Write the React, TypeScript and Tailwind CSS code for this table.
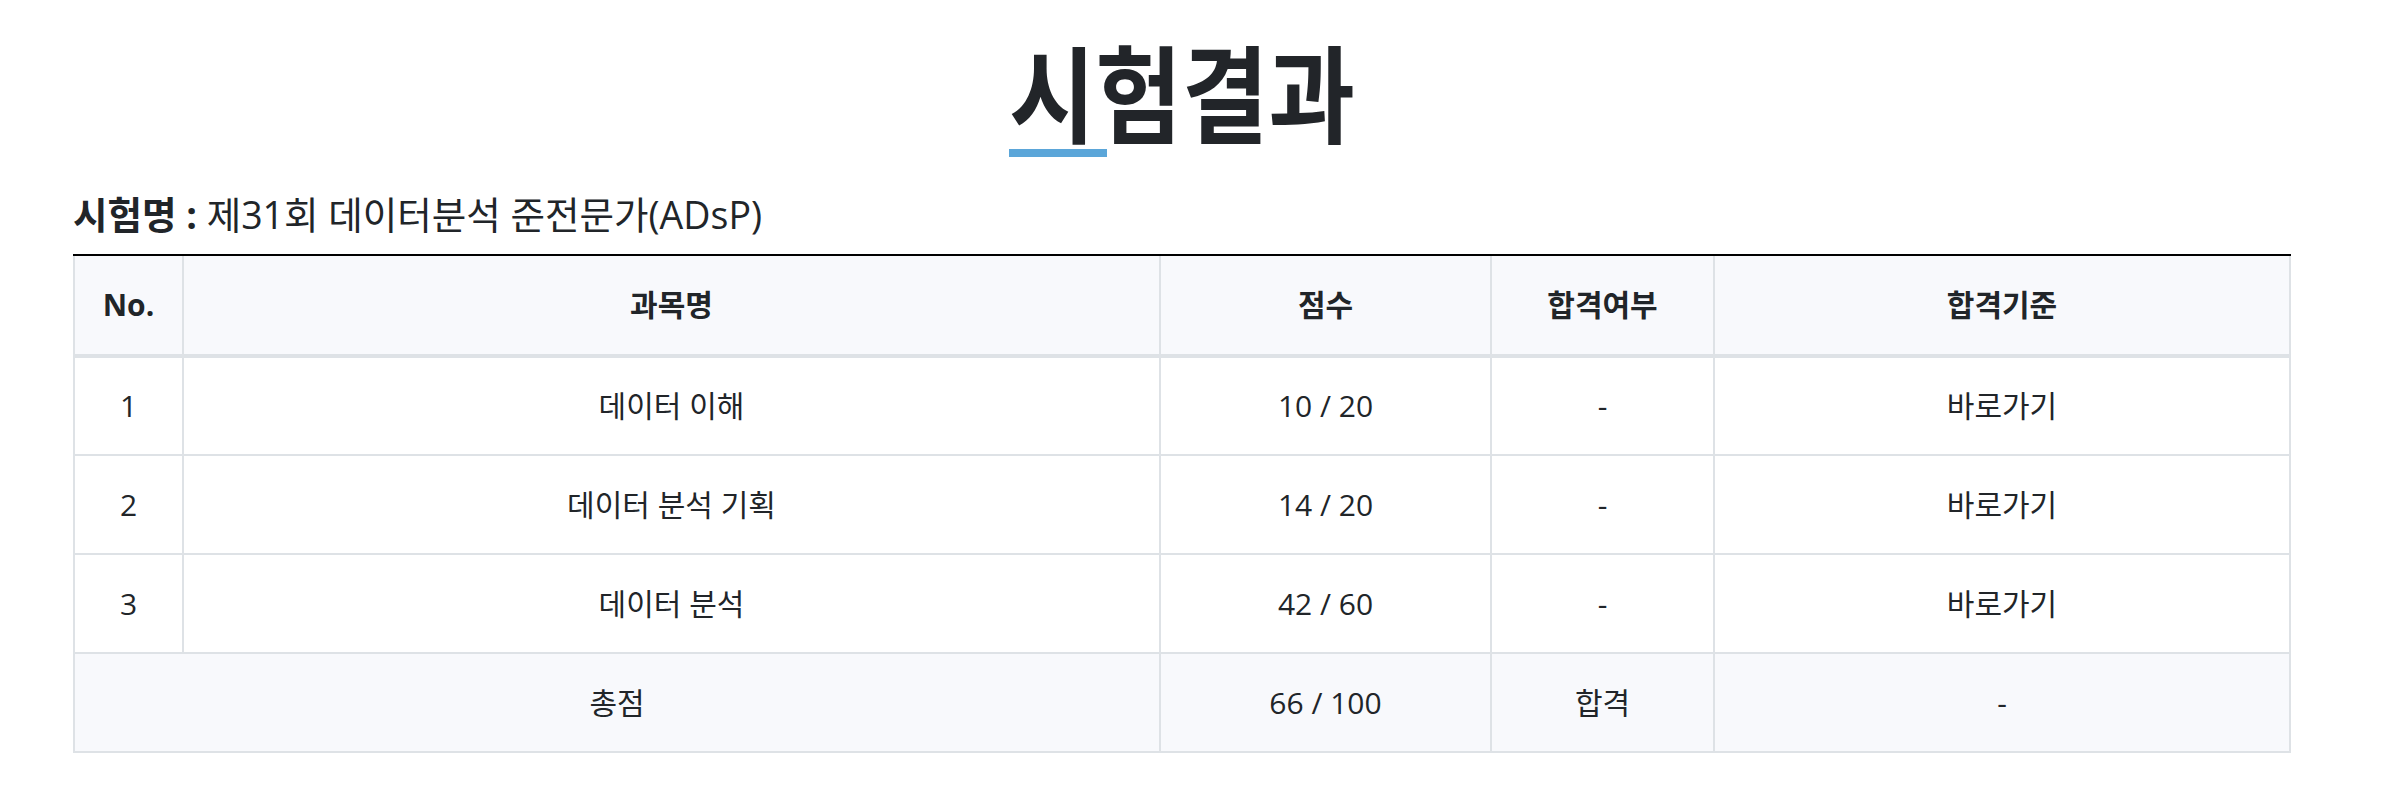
import React from "react";

const rows = [
  { no: "1", name: "데이터 이해", score: "10 / 20", pass: "-", std: "바로가기" },
  { no: "2", name: "데이터 분석 기획", score: "14 / 20", pass: "-", std: "바로가기" },
  { no: "3", name: "데이터 분석", score: "42 / 60", pass: "-", std: "바로가기" },
];

const cell = "border-2 border-[#dee2e6] p-0";
const head = "border-2 border-t-0 border-b-4 border-[#dee2e6] font-bold p-0";

export default function App() {
  return (
    <div
      className="w-[2390px] h-[792px] bg-white text-[#212529] pl-[73px] pr-[99px] pt-[48px]"
      style={{ fontFamily: '"Open Sans", "Noto Sans CJK KR", sans-serif' }}
    >
      <div className="flex justify-center">
        <div className="flex flex-col items-start">
          <h1
            className="text-[94px] font-bold leading-none text-[#222529] scale-y-[1.12] origin-bottom"
            style={{ fontFamily: '"Noto Sans CJK KR", sans-serif' }}
          >
            시험결과
          </h1>
          <div className="mt-[7px] h-[8px] w-[98px] bg-[#5ba6d9]" />
        </div>
      </div>
      <div className="mt-[39px] text-[37.5px] leading-none">
        <span className="font-bold">시험명 :</span> 제31회 데이터분석 준전문가(ADsP)
      </div>
      <div className="mt-[20px] border-t-2 border-black">
        <table className="w-full border-collapse text-[30px] text-center">
          <colgroup>
            <col className="w-[109px]" />
            <col className="w-[977px]" />
            <col className="w-[331px]" />
            <col className="w-[223px]" />
            <col />
          </colgroup>
          <thead>
            <tr className="h-[100px] bg-[#f8f9fc]">
              <th className={head}>No.</th>
              <th className={head}>과목명</th>
              <th className={head}>점수</th>
              <th className={head}>합격여부</th>
              <th className={head}>합격기준</th>
            </tr>
          </thead>
          <tbody>
            {rows.map((r) => (
              <tr key={r.no} className="h-[99px]">
                <td className={cell}>{r.no}</td>
                <td className={cell}>{r.name}</td>
                <td className={cell}>{r.score}</td>
                <td className={cell}>{r.pass}</td>
                <td className={cell}>{r.std}</td>
              </tr>
            ))}
            <tr className="h-[99px] bg-[#f8f9fc]">
              <td colSpan={2} className={cell}>총점</td>
              <td className={cell}>66 / 100</td>
              <td className={cell}>합격</td>
              <td className={cell}>-</td>
            </tr>
          </tbody>
        </table>
      </div>
    </div>
  );
}
